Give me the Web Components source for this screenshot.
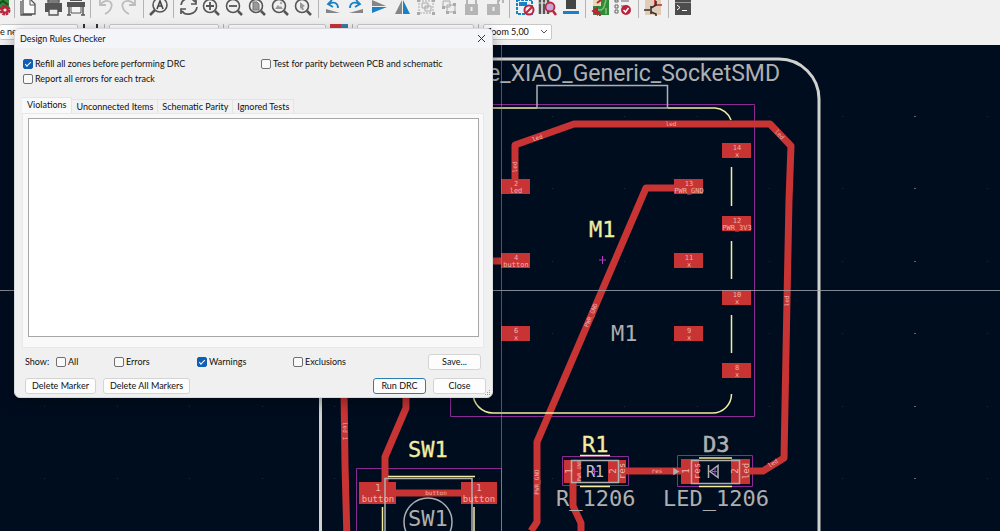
<!DOCTYPE html>
<html lang="en">
<head>
<meta charset="utf-8">
<title>PCB Editor</title>
<style>
    html, body {
        height: 100%;
        margin: 0;
        overflow: hidden;
    }

    body {
        font: 9px/12px Lato, "Open Sans", sans-serif;
        color: #101010;
    }
</style>
</head>
<body>
<pcb-editor></pcb-editor>

<script>
// every icon is drawn in a 23x18 box, the top of the toolbar is scrolled off
const ICONS = {
    setup: `<path d="M11 0h10v8H11z" fill="#2f8a3a"/><path d="M11 4l4-3 5 4" stroke="#174d1e" fill="none" stroke-width="2"/>
        <circle cx="17" cy="10" r="4" fill="none" stroke="#b9243c" stroke-width="3" stroke-dasharray="2.4 .7"/><circle cx="17" cy="10" r="2.6" fill="none" stroke="#b9243c" stroke-width="2"/>`,
    page: `<path d="M5 0V14H17V4L13 0M3 1V15H14" fill="#fafafa" stroke="#555" stroke-width="1.3"/><path d="M12 0V5H17" fill="none" stroke="#555"/>`,
    print: `<path d="M4 3h17v9h-4v-3H8v3H4z" fill="#555"/><path d="M7 0h11v2H7zM8 9h9v6H8z" fill="#eee" stroke="#555" stroke-width="1.4"/>`,
    plot: `<path d="M3 2h18v5H3z" fill="#555"/><path d="M6 0h12v1H6z" fill="#555"/><path d="M7 7v6h10V7" fill="#f5f5f5" stroke="#555"/><path d="M5 7v8M19 7v8M3 15h4M17 15h4" stroke="#555" stroke-width="1.5"/>`,
    undo: `<path d="M6 0v5h6M6 5C12-2 20 1 17 8c-1 3-4 5-6 6" fill="none" stroke="#bcbcbc" stroke-width="1.8"/>`,
    redo: `<path d="M18 0v5h-6M18 5C12-2 3 1 6 8c1 3 4 5 6 6" fill="none" stroke="#bcbcbc" stroke-width="1.8"/>`,
    find: `<circle cx="13" cy="5" r="7" fill="none" stroke="#555" stroke-width="1.6"/><path d="M8 10l-5 5" stroke="#555" stroke-width="2.5"/><path d="M10 9l3-8 3 8M11 6h4" fill="none" stroke="#444" stroke-width="1.6"/>`,
    refresh: `<path d="M4 5C5-2 14-4 18 2M19 0v4h-5M20 7c-1 8-12 9-15 4M4 14V9h5" fill="none" stroke="#555" stroke-width="1.7"/>`,
    zoomIn: `<circle cx="10" cy="6" r="6.5" fill="none" stroke="#555" stroke-width="1.6"/><path d="M15 11l4 4" stroke="#555" stroke-width="2.5"/><path d="M6 6h8M10 2v8" stroke="#555" stroke-width="1.8"/>`,
    zoomOut: `<circle cx="10" cy="6" r="6.5" fill="none" stroke="#555" stroke-width="1.6"/><path d="M15 11l4 4" stroke="#555" stroke-width="2.5"/><path d="M6 6h8" stroke="#555" stroke-width="1.8"/>`,
    zoomPage: `<circle cx="10" cy="6" r="6.5" fill="none" stroke="#555" stroke-width="1.6"/><path d="M15 11l4 4" stroke="#555" stroke-width="2.5"/><path d="M7 2h4l2 2v6H7z" fill="#999" stroke="#777"/>`,
    zoomObjects: `<circle cx="10" cy="6" r="6.5" fill="none" stroke="#555" stroke-width="1.6"/><path d="M15 11l4 4" stroke="#555" stroke-width="2.5"/><path d="M6 9l3-4 2 2 1-1 2 3z" fill="#999"/><circle cx="12" cy="3" r="1.2" fill="#aaa"/>`,
    zoomArea: `<circle cx="10" cy="6" r="6.5" fill="none" stroke="#555" stroke-width="1.6"/><path d="M15 11l4 4" stroke="#555" stroke-width="2.5"/><path d="M8 2l5 4-2 1 1 3-2 0-1-2-1 1z" fill="#999"/>`,
    rotateCcw: `<path d="M4 9v4h14z" fill="#858585"/><path d="M7 4c5-3 9-1 9 4M10 0L6 4l5 3" fill="none" stroke="#1a81c4" stroke-width="1.8"/>`,
    rotateCw: `<path d="M18 9v4H4z" fill="#858585"/><path d="M14 4C9 1 5 3 5 8M11 0l4 4-5 3" fill="none" stroke="#1a81c4" stroke-width="1.8"/>`,
    mirrorV: `<path d="M4 0l14 6H4z" fill="#858585"/><path d="M4 7h15L4 13z" fill="#1a81c4"/>`,
    mirrorH: `<path d="M11 0v14H4z" fill="#858585"/><path d="M12 0v14h7z" fill="#1a81c4"/>`,
    group: `<path d="M5 0v13M19 0v13M3 13h16M5 1h14" stroke="#aaa" stroke-dasharray="2 1" fill="none"/><path d="M8 3h6v5H8zM11 6h6v5h-6z" fill="#eee" stroke="#aaa"/><path d="M3 12h3v3H3zM18 12h3v3h-3zM3 0h3v2H3zM18 0h3v2h-3z" fill="#aaa"/>`,
    ungroup: `<path d="M6 1h7v6H6zM10 5h8v7h-8z" fill="#eee" stroke="#aaa"/><path d="M5 6h3v3H5zM9 11h3v3H9zM16 11h3v3h-3zM16 3h3v3h-3z" fill="#aaa"/>`,
    lock: `<path d="M7 5V0M16 5V0" stroke="#b5b5b5" stroke-width="2"/><path d="M5 4h13v11H5z" fill="#b5b5b5"/><path d="M11.5 7v4" stroke="#eee" stroke-width="2"/>`,
    unlock: `<path d="M15 5V1l2-2M20 3V0" stroke="#b5b5b5" stroke-width="2"/><path d="M4 4h13v11H4z" fill="#b5b5b5"/><path d="M10.5 7v4" stroke="#eee" stroke-width="2"/>`,
    footprint: `<path d="M4 0h15v14H4z" fill="#e8f4fb" stroke="#1a81c4" stroke-width="2" stroke-dasharray="3 1"/><path d="M6 2h8v4H6z" fill="#1a81c4"/><circle cx="16" cy="10" r="4.5" fill="#f6e8ea" stroke="#b9243c" stroke-width="2"/><path d="M13 13l6-6" stroke="#b9243c" stroke-width="2"/>`,
    library: `<path d="M4 0v14M8 0v14M12 0v14" stroke="#555" stroke-width="2.5"/><path d="M3 3h10" stroke="#ddd"/><circle cx="14" cy="7" r="4.5" fill="#c9a3d6" stroke="#b9243c" stroke-width="1.8"/><path d="M17 11l3 4" stroke="#b9243c" stroke-width="2.5"/>`,
    update: `<path d="M7 0h10v9H7z" fill="#444"/><path d="M4 11h16v3H4z" fill="#1a81c4"/>`,
    drc: `<path d="M4 0h16v15H4z" fill="#2f8a3a"/><path d="M4 0h8v6H4z" fill="#e8d9b5"/><path d="M8 9c3 2 6 1 7-2l2-7M17 8v6" fill="none" stroke="#7cbf6a" stroke-width="1.6"/><path d="M4 11l4-3v6zM7 11c3 1 4 3 4 5M8 3l4-3" fill="none" stroke="#b9243c" stroke-width="2"/>`,
    checks: `<path d="M3 0h3v2H3zM3 5h3v3H3zM3 10h3v3H3z" fill="none" stroke="#666"/><path d="M9 1h8M9 6h3" stroke="#666"/><circle cx="14" cy="10" r="5" fill="#b9243c"/><path d="M11.5 10l2 2 3-4" fill="none" stroke="#fff" stroke-width="1.5"/>`,
    schematic: `<path d="M3 0h16v15H3z" fill="#e3ccb5"/><path d="M13 0v6M13 5h7" stroke="#b9243c" stroke-width="1.6"/><path d="M2 10h6M9 6v8M9 8l5-3V1M9 12l5 2v2" fill="none" stroke="#333" stroke-width="1.6"/>`,
    console: `<path d="M3 0h16v15H3z" fill="#4d4d4d"/><path d="M3 2.5h16" stroke="#999"/><path d="M5 5l3 2.5L5 10M10 10.500h5" fill="none" stroke="#fff"/>`
};

const TOOLBAR = [
    ["setup"],
    ["page", "print", "plot"],
    ["undo", "redo"],
    ["find"],
    ["refresh", "zoomIn", "zoomOut", "zoomPage", "zoomObjects", "zoomArea"],
    ["rotateCcw", "rotateCw", "mirrorV", "mirrorH", "group", "ungroup", "lock", "unlock"],
    ["footprint", "library", "update"],
    ["drc", "checks"],
    ["schematic"],
    ["console"]
];

class MainToolbar extends HTMLElement {
    connectedCallback() {
        this.render();
    }

    renderButton(name) {
        return `<button aria-label="${name}"><svg width="23" height="18" viewBox="0 0 23 18">${ICONS[name]}</svg></button>`;
    }

    render() {
        const groups = TOOLBAR.map(group =>
            `<div class="group">${group.map(name => this.renderButton(name)).join("")}</div>`
        ).join("");

        this.attachShadow({ mode: "open" }).innerHTML = `
            <style>
                :host {
                    display: flex;
                    height: 18px;
                    margin-left: -12px;
                }

                .group {
                    display: flex;
                    flex: none;
                }

                .group + .group {
                    margin-left: 3px;
                    padding-left: 3px;
                    border-left: 1px solid #b4b4b4;
                }

                button {
                    width: 23px;
                    height: 18px;
                    padding: 0;
                    border: 0;
                    background: none;
                }

                svg {
                    display: block;
                }
            </style>
            ${groups}
        `;
    }
}

class OptionsToolbar extends HTMLElement {
    connectedCallback() {
        this.render();
    }

    render() {
        this.attachShadow({ mode: "open" }).innerHTML = `
            <style>
                :host {
                    display: flex;
                    align-items: center;
                    gap: 4px;
                    height: 27px;
                }

                select {
                    appearance: none;
                    box-sizing: border-box;
                    flex: none;
                    height: 16px;
                    padding: 0 2px;
                    border: 1px solid #c8c8c8;
                    border-radius: 2px;
                    font: inherit;
                    color: inherit;
                    background: #fff;
                }

                .track { width: 78px; border-left: 0; padding: 0; }
                .via { width: 110px; }
                .layer { width: 98px; }
                .grid { width: 117px; }

                .zoom {
                    width: 69px;
                    background: #fff url("data:image/svg+xml,%3Csvg xmlns='http://www.w3.org/2000/svg' width='7' height='5'%3E%3Cpath d='M0 1l3 3 3-3' fill='none' stroke='%23555'/%3E%3C/svg%3E") no-repeat right 3px center;
                }

                i {
                    width: 1px;
                    height: 16px;
                    background: #b4b4b4;
                }

                svg {
                    flex: none;
                }
            </style>
            <select class="track" aria-label="Track width"><option>e ne</option></select>
            <svg width="18" height="16"><path d="M2 0v14M15 0v14" stroke="#333" stroke-width="2"/></svg>
            <i></i>
            <select class="via" aria-label="Via size"></select>
            <i></i>
            <select class="layer" aria-label="Layer"></select>
            <svg width="18" height="16"><path d="M0 0h11v12H0z" fill="#c8323c"/><path d="M11 0h7v12h-7z" fill="#3a7ca5"/></svg>
            <i></i>
            <select class="grid" aria-label="Grid"></select>
            <i></i>
            <select class="zoom" aria-label="Zoom"><option>Zoom 5,00</option></select>
        `;
    }
}

class PcbCanvas extends HTMLElement {
    connectedCallback() {
        this.render();
    }

    // grid points, the column at 914 shows a little brighter
    renderGrid() {
        let dots = "";
        for (let x = 914 - 12 * 72.5; x < 1000; x += 72.5) {
            for (let y = 116; y < 531; y += 72.5) {
                const px = Math.round(x);
                dots += `<rect x="${px}" y="${Math.floor(y)}" width="${px === 914 ? 2 : 1}" height="1" fill="${px === 914 ? "#5d6a76" : "#1d2b3a"}"/>`;
            }
        }
        return dots;
    }

    // small pad: number on top, net name below
    renderPad(x, y, number, net) {
        return `
            <rect x="${x}" y="${y}" width="29" height="15" fill="#c83434"/>
            <text class="net" x="${x + 15}" y="${y + 7}">${number}</text>
            <text class="net" x="${x + 15}" y="${y + 14}">${net}</text>
        `;
    }

    renderPads() {
        return [
            [501, 179, "2", "led"],
            [501, 253, "4", "button"],
            [501, 326, "6", "x"],
            [674, 179, "13", "PWR_GND"],
            [674, 253, "11", "x"],
            [674, 326, "9", "x"],
            [722, 143, "14", "x"],
            [722, 216, "12", "PWR_3V3"],
            [722, 290, "10", "x"],
            [722, 363, "8", "x"]
        ].map(pad => this.renderPad(...pad)).join("");
    }

    // text that runs along a track or a pad
    renderTurned(type, x, y, angle, text) {
        return `<text class="${type}" transform="translate(${x} ${y}) rotate(${angle})">${text}</text>`;
    }

    renderLabels() {
        return [
            ["pad", 572, 471, -90, "1"],
            ["tiny", 581, 471, -90, "PWR GND"],
            ["pad", 616, 471, -90, "2"],
            ["pad", 625, 471, -90, "res"],
            ["pad", 689, 471, -90, "1"],
            ["pad", 700, 471, -90, "res"],
            ["pad", 738, 471, -90, "2"],
            ["pad", 749, 471, -90, "led"],
            ["track", 436, 495, 0, "button"],
            ["track", 657, 473, 0, "res"],
            ["track", 671, 126, 0, "led"],
            ["track", 538, 140, -20, "led"],
            ["track", 517, 167, -90, "led"],
            ["track", 778, 136, 47, "led"],
            ["track", 789, 301, -89, "led"],
            ["track", 774, 465, -32, "led"],
            ["track", 593, 316, -67, "PWR_GND"],
            ["track", 539, 482, -90, "PWR_GND"],
            ["track", 343, 431, 89, "led 1"]
        ].map(label => this.renderTurned(...label)).join("");
    }

    render() {
        this.attachShadow({ mode: "open" }).innerHTML = `
            <style>
                :host {
                    display: block;
                    min-height: 0;
                    background: #000d1f;
                }

                svg {
                    display: block;
                    width: 100%;
                    height: 100%;
                }

                text {
                    font: 22px "DejaVu Sans Mono", monospace;
                    fill: #afafaf;
                }

                .title { font: 23px Roboto, sans-serif; text-anchor: end; }
                .silk { fill: #f2eda1; stroke: #f2eda1; stroke-width: .3; }
                .net { font-size: 7px; fill: #eab5b0; text-anchor: middle; }
                .track { font-size: 6px; fill: #eab5b0; text-anchor: middle; }
                .tiny { font-size: 5px; fill: #eab5b0; text-anchor: middle; }
                .pad { font-size: 9px; fill: #eab5b0; text-anchor: middle; }
                .small { font-size: 15px; text-anchor: middle; fill: #c2c2d0; }

                .tracks { fill: none; stroke: #c83434; stroke-width: 7; stroke-linejoin: round; }
                .courtyard { fill: none; stroke: #8a2a92; }
                .fab { fill: none; stroke: #afafaf; stroke-width: 1.5; }
                .lines { fill: none; stroke: #f2eda1; stroke-width: 1.5; }
            </style>
            <svg viewBox="0 45 1000 486" preserveAspectRatio="xMinYMin slice">
                ${this.renderGrid()}

                <path d="M320.5 531V98a39 39 0 0 1 39-39H779a40 40 0 0 1 40 40V531" fill="none" stroke="#d0d2cd" stroke-width="3"/>

                <g class="courtyard">
                    <path d="M450.5 104.5h304v312h-304z"/>
                    <path d="M356.5 531V468.5h145V531"/>
                    <path d="M562.5 456.5h66v29h-66zM677.5 455.5h75v31h-75z"/>
                </g>

                <g class="tracks">
                    <path d="M515 186V145L574 124H770L791 146L789 200L787 300L784 458L763 471H740"/>
                    <path d="M688 188H646L537 442V522L531 531"/>
                    <path d="M480 261H515"/>
                    <path d="M344 390L345 465L347 540"/>
                    <path d="M406 390V408L385 457V493H480"/>
                    <path d="M615 471H690M573 475V506L581 523V540"/>
                </g>

                <g class="lines">
                    <path d="M480 108H537M668 108H715a18 18 0 0 1 16 12"/>
                    <path d="M731.5 167v39M731.5 241v38M731.5 315v38"/>
                    <path d="M731.5 394a19 19 0 0 1-19 19H493a20 20 0 0 1-20-20"/>
                    <path d="M388 476.5H475M382.5 507V531M474 507V531"/>
                    <path d="M580 455.5h30M580 486.5h30M699 458h33M699 486.5h33"/>
                </g>

                <g fill="#c83434">
                    <path d="M359 482h37v22h-37zM461 482h36v22h-36z"/>
                    <path d="M564 460h17v23h-17zM608 460h18v23h-18z"/>
                    <path d="M681 459h18v25h-18zM731 459h19v25h-19z"/>
                </g>
                ${this.renderPads()}

                <g class="fab">
                    <path d="M537 108V85.5H667.5V108z"/>
                    <path d="M385 531V478.5h87V531"/>
                    <circle cx="428" cy="522" r="24"/>
                    <path d="M571.5 460.5h47v22h-47zM691.5 460.5h48v23h-48z"/>
                    <path d="M708.5 465v13M710 471.5l8-6v12z"/>
                    <path d="M674 469v5l4-2.5z" fill="#afafaf"/>
                </g>
                <path d="M599 260h7M602.5 256v8M591 471.5h7M594.5 468v7M712 471.5h6M715 468v7" stroke="#b43cc0"/>

                <text class="title" x="780" y="81">e_XIAO_Generic_SocketSMD</text>
                <text class="silk" x="589" y="237">M1</text>
                <text x="611" y="341">M1</text>
                <text class="silk" x="408" y="457">SW1</text>
                <text x="408" y="526">SW1</text>
                <text class="silk" x="582" y="452">R1</text>
                <text x="703" y="452" stroke="#afafaf" stroke-width=".6">D3</text>
                <text x="556" y="506">R_1206</text>
                <text x="663" y="506">LED_1206</text>
                <text class="small" x="595" y="477">R1</text>

                <text class="pad" x="378" y="491">1</text>
                <text class="pad" x="378" y="502">button</text>
                <text class="pad" x="479" y="491">1</text>
                <text class="pad" x="479" y="502">button</text>
                ${this.renderLabels()}

                <path d="M0 290.5H1000" stroke="#a0a6ae" stroke-opacity=".8"/>
                <path d="M501.5 45V531" stroke="#a0a6ae" stroke-opacity=".5"/>
            </svg>
        `;
    }
}

class CheckOption extends HTMLElement {
    connectedCallback() {
        this.render();
    }

    render() {
        this.attachShadow({ mode: "open" }).innerHTML = `
            <style>
                :host {
                    display: block;
                }

                label {
                    display: flex;
                    align-items: center;
                    gap: 2px;
                    white-space: nowrap;
                }

                input {
                    appearance: none;
                    display: grid;
                    place-items: center;
                    box-sizing: border-box;
                    width: 10px;
                    height: 10px;
                    margin: 0;
                    border: 1px solid #707070;
                    border-radius: 2px;
                    background: #f9f9f9;
                }

                input:checked {
                    border-color: #0f5fb4;
                    background: #0f5fb4;
                }

                input:checked::before {
                    content: "";
                    width: 6px;
                    height: 3px;
                    margin-bottom: 2px;
                    border: solid #fff;
                    border-width: 0 0 1px 1px;
                    box-sizing: border-box;
                    transform: rotate(-45deg);
                }
            </style>
            <label>
                <input type="checkbox" ${this.hasAttribute("checked") ? "checked" : ""}>
                <span><slot></slot></span>
            </label>
        `;
    }
}

class DialogButton extends HTMLElement {
    connectedCallback() {
        this.render();
    }

    render() {
        this.attachShadow({ mode: "open" }).innerHTML = `
            <style>
                :host {
                    display: block;
                    min-width: 53px;
                }

                button {
                    display: block;
                    box-sizing: border-box;
                    width: 100%;
                    height: 16px;
                    padding: 0 6px;
                    border: 1px solid #d4d4d4;
                    border-radius: 3px;
                    font: inherit;
                    color: inherit;
                    line-height: 14px;
                    white-space: nowrap;
                    background: #fdfdfd;
                }

                :host([primary]) button {
                    border-color: #2b7fae;
                }
            </style>
            <button><slot></slot></button>
        `;
    }
}

class DrcDialog extends HTMLElement {
    connectedCallback() {
        this.render();
    }

    renderStyle() {
        return `
            <style>
                :host {
                    display: flex;
                    flex-direction: column;
                    box-sizing: border-box;
                    overflow: hidden;
                    border: 1px solid #d8dade;
                    border-radius: 6px;
                    background: #f0f0f0;
                    box-shadow: 0 4px 14px rgba(0, 0, 0, .35);
                }

                header {
                    display: flex;
                    align-items: center;
                    justify-content: space-between;
                    height: 19px;
                    padding: 0 5px;
                    background: #f3f5f9;
                }

                h1 {
                    margin: 0;
                    font: inherit;
                }

                .close {
                    width: 11px;
                    height: 11px;
                    padding: 0;
                    border: 0;
                    background: none;
                }

                .close svg {
                    display: block;
                }

                .options {
                    display: grid;
                    grid-template-columns: 238px 1fr;
                    row-gap: 3px;
                    padding: 10px 8px 0;
                }

                .tabs {
                    display: flex;
                    align-items: flex-end;
                    margin: 12px 7px 0;
                }

                .tabs button {
                    box-sizing: border-box;
                    height: 14px;
                    padding: 0 4px;
                    border: 1px solid #e4e4e4;
                    border-width: 1px 1px 0 0;
                    font: inherit;
                    color: inherit;
                    background: #f2f2f2;
                }

                .tabs button[aria-selected="true"] {
                    height: 16px;
                    padding: 0 5px 2px;
                    background: #f9f9f9;
                }

                .panel {
                    display: flex;
                    flex: 1;
                    margin: 0 8px 0 7px;
                    padding: 4px 4px 10px 5px;
                    border: 1px solid #e8e8e8;
                    background: #f9f9f9;
                }

                .list {
                    flex: 1;
                    border: 1px solid #a6a6a6;
                    background: #fff;
                }

                .show {
                    display: grid;
                    grid-template-columns: 31px 58px 83px 96px 1fr auto;
                    align-items: center;
                    padding: 6px 11px 0 10px;
                }

                .actions {
                    display: flex;
                    gap: 7px;
                    padding: 8px 6px 3px 10px;
                }

                .spacer {
                    flex: 1;
                }

                /* resize grip in the corner */
                .grip {
                    position: absolute;
                    right: 1px;
                    bottom: 1px;
                }
            </style>
        `;
    }

    render() {
        this.attachShadow({ mode: "open" }).innerHTML = `
            ${this.renderStyle()}
            <header>
                <h1>Design Rules Checker</h1>
                <button class="close" aria-label="Close window">
                    <svg width="11" height="11"><path d="M2 2l7 7M9 2l-7 7" stroke="#333"/></svg>
                </button>
            </header>
            <div class="options">
                <check-option checked>Refill all zones before performing DRC</check-option>
                <check-option>Test for parity between PCB and schematic</check-option>
                <check-option>Report all errors for each track</check-option>
            </div>
            <div class="tabs" role="tablist">
                <button role="tab" aria-selected="true">Violations</button>
                <button role="tab">Unconnected Items</button>
                <button role="tab">Schematic Parity</button>
                <button role="tab">Ignored Tests</button>
            </div>
            <div class="panel" role="tabpanel"><div class="list"></div></div>
            <div class="show">
                <span>Show:</span>
                <check-option>All</check-option>
                <check-option>Errors</check-option>
                <check-option checked>Warnings</check-option>
                <check-option>Exclusions</check-option>
                <dialog-button>Save...</dialog-button>
            </div>
            <div class="actions">
                <dialog-button>Delete Marker</dialog-button>
                <dialog-button>Delete All Markers</dialog-button>
                <span class="spacer"></span>
                <dialog-button primary>Run DRC</dialog-button>
                <dialog-button>Close</dialog-button>
            </div>
            <svg class="grip" width="6" height="6"><path d="M4 0h1v1H4zM2 2h1v1H2zM4 2h1v1H4zM0 4h1v1H0zM2 4h1v1H2zM4 4h1v1H4z" fill="#a0a0a0"/></svg>
        `;
    }
}

class PcbEditor extends HTMLElement {
    connectedCallback() {
        this.render();
    }

    render() {
        this.attachShadow({ mode: "open" }).innerHTML = `
            <style>
                :host {
                    position: relative;
                    display: flex;
                    flex-direction: column;
                    height: 100%;
                    overflow: hidden;
                    background: #f0f0f0;
                }

                pcb-canvas {
                    flex: 1;
                }

                /* floats over the board */
                drc-dialog {
                    position: absolute;
                    left: 14px;
                    top: 28px;
                    width: 479px;
                    height: 370px;
                }
            </style>
            <main-toolbar></main-toolbar>
            <options-toolbar></options-toolbar>
            <pcb-canvas></pcb-canvas>
            <drc-dialog></drc-dialog>
        `;
    }
}

customElements.define("main-toolbar", MainToolbar);
customElements.define("options-toolbar", OptionsToolbar);
customElements.define("pcb-canvas", PcbCanvas);
customElements.define("check-option", CheckOption);
customElements.define("dialog-button", DialogButton);
customElements.define("drc-dialog", DrcDialog);
customElements.define("pcb-editor", PcbEditor);
</script>
</body>
</html>
